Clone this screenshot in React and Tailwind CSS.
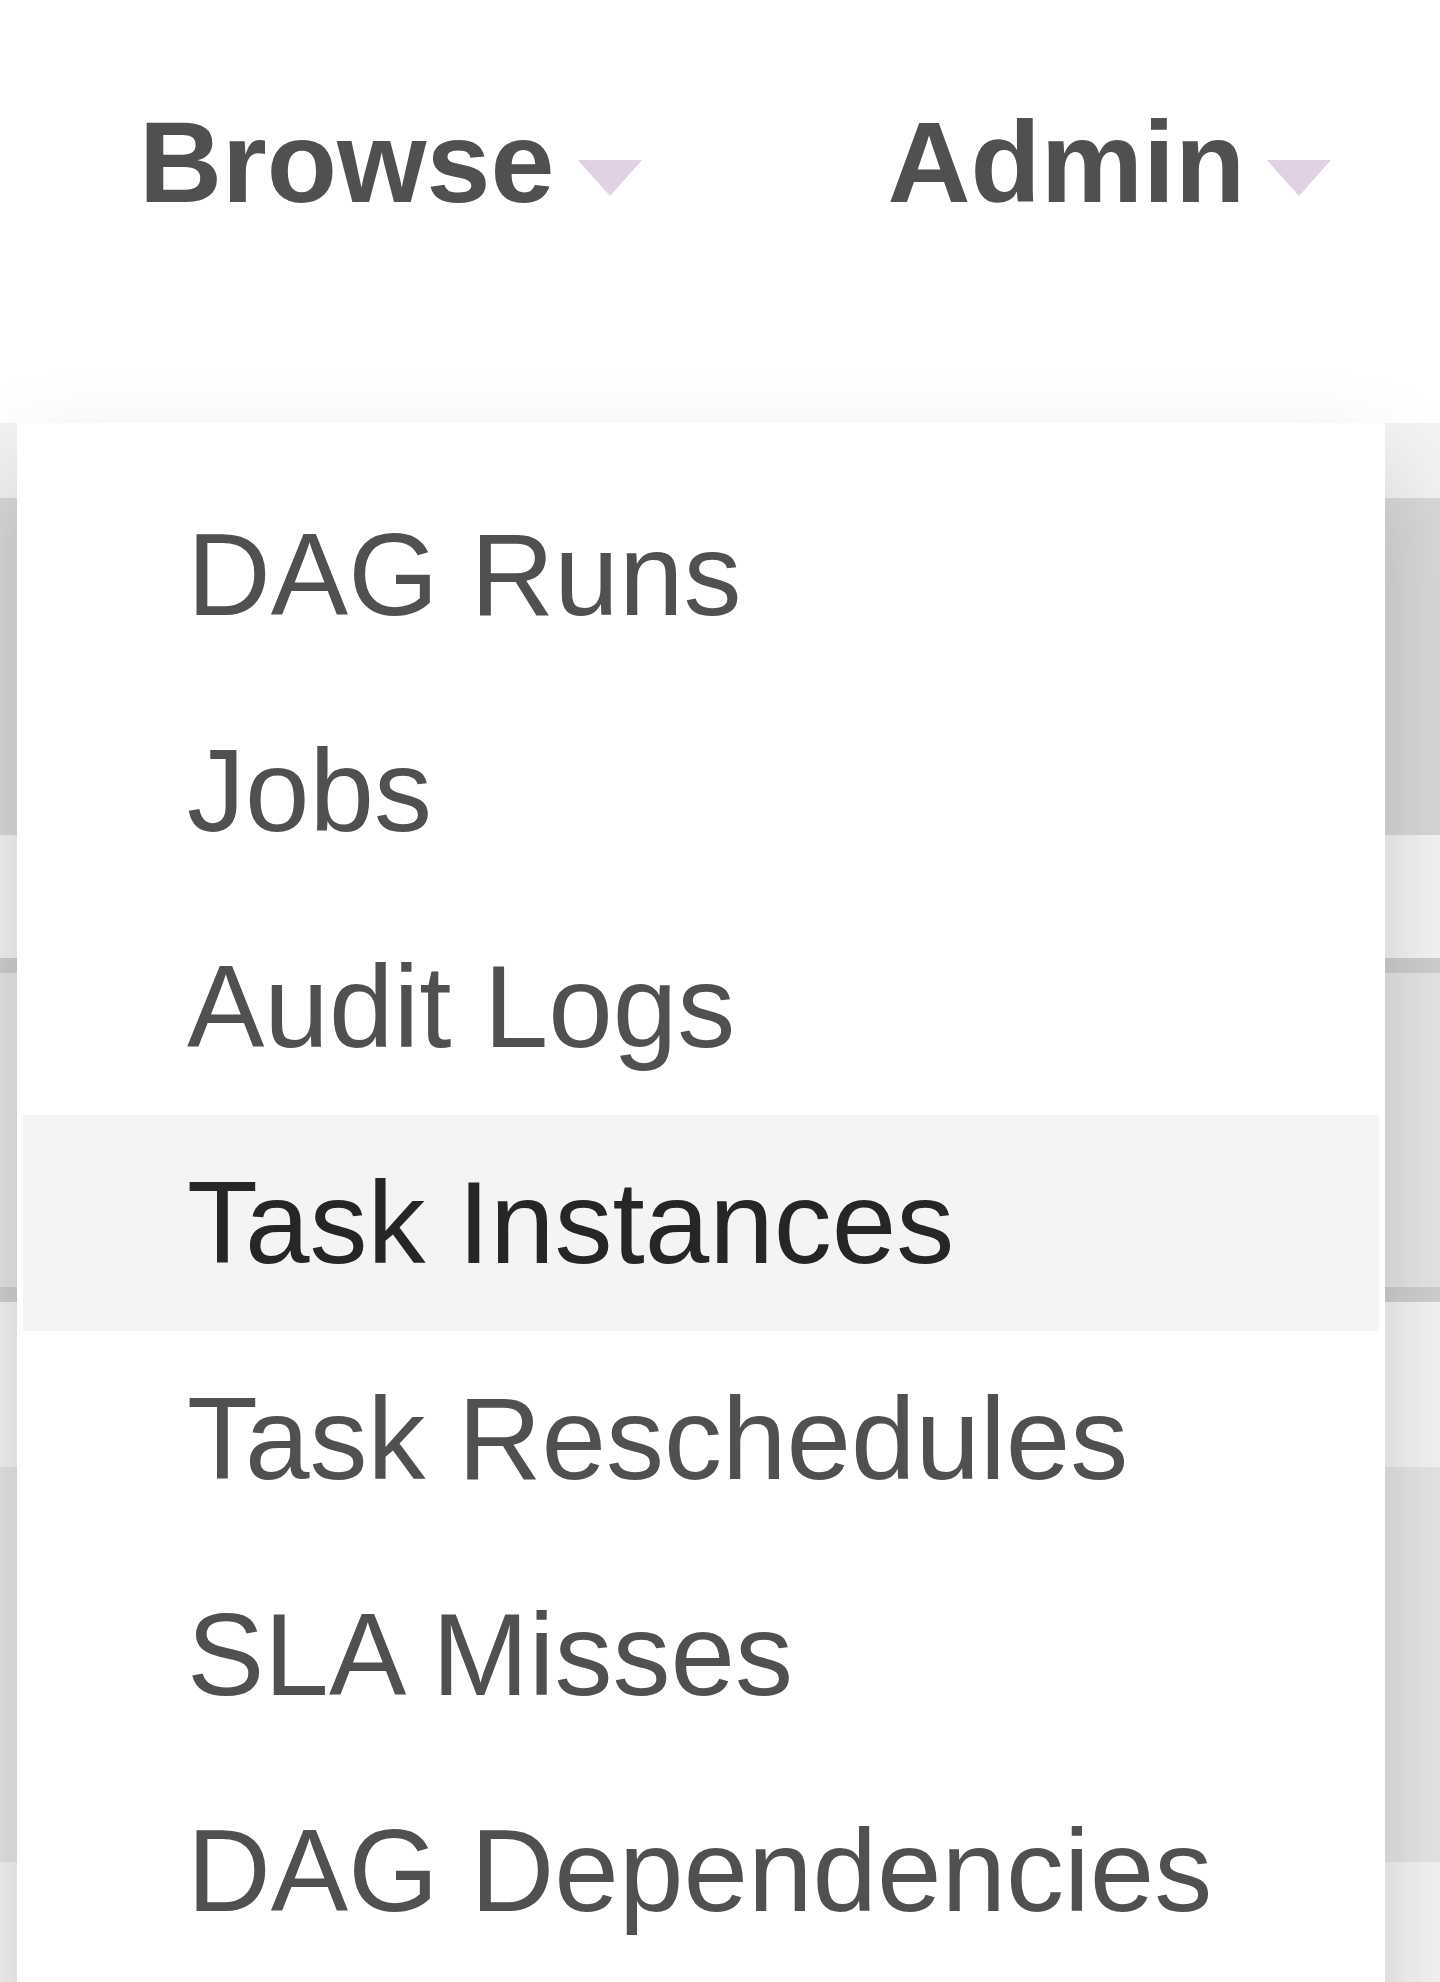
import React from "react";

const BROWSE_ITEMS = [
  "DAG Runs",
  "Jobs",
  "Audit Logs",
  "Task Instances",
  "Task Reschedules",
  "SLA Misses",
  "DAG Dependencies",
];

const ACTIVE_ITEM = "Task Instances";

// table rows peeking out behind the open menu
const BACKGROUND_ROWS = [
  { height: "h-[75px]", color: "bg-[#f3f3f3]" },
  { height: "h-[337px]", color: "bg-[#d9d9d9]" },
  { height: "h-[123px]", color: "bg-[#f5f5f5]" },
  { height: "h-[15px]", color: "bg-[#d0d0d0]" },
  { height: "h-[314px]", color: "bg-[#e6e6e6]" },
  { height: "h-[15px]", color: "bg-[#d0d0d0]" },
  { height: "h-[165px]", color: "bg-[#f5f5f5]" },
  { height: "h-[395px]", color: "bg-[#e6e6e6]" },
  { height: "h-[120px]", color: "bg-[#f5f5f5]" },
];

function Caret({ className }) {
  return (
    <span
      className={`inline-block h-0 w-0 border-x-[32px] border-t-[36px] border-x-transparent border-t-[#e0d2e4] ${className}`}
    />
  );
}

function NavLink({ label, caretOffset }) {
  return (
    <a className="flex items-start text-[115px] font-bold leading-none text-[#51504f]">
      <span>{label}</span>
      <Caret className={`mt-[55px] ${caretOffset}`} />
    </a>
  );
}

export default function App() {
  return (
    <div className="relative h-[1982px] w-[1440px] overflow-hidden bg-white font-['Liberation_Sans',Arial,sans-serif]">
      <nav className="flex h-[423px] items-start gap-[245px] pl-[139px] pt-[105px]">
        <NavLink label="Browse" caretOffset="ml-[24px]" />
        <NavLink label="Admin" caretOffset="ml-[22px]" />
      </nav>

      <div className="flex flex-col">
        {BACKGROUND_ROWS.map((row, index) => (
          <div key={index} className={`${row.height} ${row.color}`} />
        ))}
      </div>

      <ul className="absolute left-[17px] top-[423px] z-10 w-[1368px] bg-white pb-[120px] pt-[44px] shadow-[0_49px_98px_rgba(0,0,0,0.175)]">
        {BROWSE_ITEMS.map((item) => {
          const isActive = item === ACTIVE_ITEM;

          return (
            <li key={item}>
              <a
                className={`mx-[6px] block h-[216px] pl-[164px] text-[116px] leading-[216px] ${
                  isActive
                    ? "bg-[#f4f4f4] text-[#262626]"
                    : "text-[#51504f]"
                }`}
              >
                {item}
              </a>
            </li>
          );
        })}
      </ul>
    </div>
  );
}
